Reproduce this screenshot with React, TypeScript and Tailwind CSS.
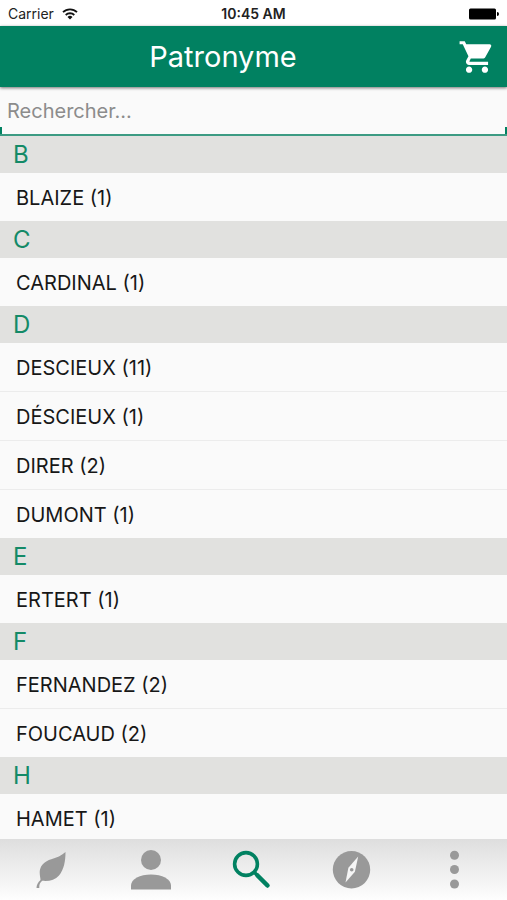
import React from "react";

type Group = { letter: string; names: { name: string; count: number }[] };

const groups: Group[] = [
  { letter: "B", names: [{ name: "BLAIZE", count: 1 }] },
  { letter: "C", names: [{ name: "CARDINAL", count: 1 }] },
  {
    letter: "D",
    names: [
      { name: "DESCIEUX", count: 11 },
      { name: "DÉSCIEUX", count: 1 },
      { name: "DIRER", count: 2 },
      { name: "DUMONT", count: 1 },
    ],
  },
  { letter: "E", names: [{ name: "ERTERT", count: 1 }] },
  {
    letter: "F",
    names: [
      { name: "FERNANDEZ", count: 2 },
      { name: "FOUCAUD", count: 2 },
    ],
  },
  { letter: "H", names: [{ name: "HAMET", count: 1 }] },
];

function StatusBar() {
  return (
    <div className="grid h-[26px] shrink-0 grid-cols-3 items-center bg-white px-2 pt-0.5 text-sm text-[#222]">
      <div className="flex items-center gap-2">
        <span>Carrier</span>
        <svg className="h-3 w-4" viewBox="0 0 16 12" fill="none" stroke="#111" strokeWidth="1.8" aria-hidden="true">
          <path d="M1 4.2a10 10 0 0 1 14 0" />
          <path d="M3.7 7a6.2 6.2 0 0 1 8.6 0" />
          <path d="M5.5 9a3.6 3.6 0 0 1 5 0L8 11.6z" fill="#111" stroke="none" />
        </svg>
      </div>
      <span className="text-center font-semibold">10:45 AM</span>
      <svg className="h-3 w-[30px] justify-self-end" viewBox="0 0 30 12" aria-hidden="true">
        <rect x="0" y="0.5" width="27" height="11" rx="1.5" fill="#000" />
        <path d="M28 4q2 0 2 2t-2 2z" fill="#000" />
      </svg>
    </div>
  );
}

function Header() {
  return (
    <header className="relative z-10 flex h-[61px] shrink-0 items-center bg-[#018161] pr-[11px] shadow-[0_1px_3px_rgba(0,0,0,0.55)]">
      <h1 className="flex-1 pr-3 text-center text-[29px] text-white">Patronyme</h1>
      <button type="button" aria-label="Panier">
        <svg className="size-[38px]" viewBox="0 0 24 24" fill="#fff" aria-hidden="true">
          <path d="M7 18c-1.1 0-1.99.9-1.99 2S5.9 22 7 22s2-.9 2-2-.9-2-2-2zM1 2v2h2l3.6 7.59-1.35 2.45c-.16.28-.25.61-.25.96 0 1.1.9 2 2 2h12v-2H7.42c-.14 0-.25-.11-.25-.25l.03-.12.9-1.63h7.45c.75 0 1.41-.41 1.75-1.03l3.58-6.49A1 1 0 0 0 20 4H5.21l-.94-2H1zm16 16c-1.1 0-1.99.9-1.99 2s.89 2 1.99 2 2-.9 2-2-.9-2-2-2z" />
        </svg>
      </button>
    </header>
  );
}

function SearchField() {
  return (
    <div className="shrink-0 bg-[linear-gradient(#018161,#018161),linear-gradient(#018161,#018161)] bg-[length:2px_9px] bg-[position:left_bottom,right_bottom] bg-no-repeat">
      <input
        type="search"
        aria-label="Rechercher"
        placeholder="Rechercher..."
        className="block h-[49px] w-full border-b-2 border-[#3c9b83] px-[7px] text-xl text-[#222] outline-none placeholder:text-[#8c8c8c]"
      />
    </div>
  );
}

function NameList() {
  return (
    <main className="min-h-0 flex-1 overflow-hidden">
      {groups.map((group) => (
        <section key={group.letter}>
          <h2 className="flex h-[37px] items-center bg-[#e1e1df] px-[13px] text-2xl text-[#148a67]">{group.letter}</h2>
          <ul className="divide-y divide-[#ececec]">
            {group.names.map(({ name, count }) => (
              <li key={name} className="box-content flex h-[47px] items-center px-4 pt-px text-xl text-[#171717]">
                {name} ({count})
              </li>
            ))}
          </ul>
        </section>
      ))}
    </main>
  );
}

const tabs: { label: string; icon: React.ReactNode }[] = [
  {
    label: "Arbre",
    icon: (
      <svg className="size-10" viewBox="0 0 40 40" fill="#999" aria-hidden="true">
        <path d="M35.500 2C31 6 27 7.500 22 9C13 11.500 9.500 17 9.700 23C9.800 26 10.500 28 10.500 30C8 32 6.500 35 6.500 38H9.300C9 35 10 32.500 12.200 30.800C19 31.500 25 30 29 25.500C34 19.500 35.500 11 35.500 2z" />
      </svg>
    ),
  },
  {
    label: "Profil",
    icon: (
      <svg className="size-10" viewBox="0 0 40 40" fill="#999" aria-hidden="true">
        <circle cx="20" cy="10" r="10" />
        <path d="M0 39.5v-4C0 29 9 24.5 20 24.5s20 4.5 20 11v4z" />
      </svg>
    ),
  },
  {
    label: "Recherche",
    icon: (
      <svg className="size-10" viewBox="0 0 40 40" fill="none" stroke="#018161" aria-hidden="true">
        <circle cx="15" cy="14" r="11.4" strokeWidth="3.6" />
        <path d="m23.500 22.500 3 3" strokeWidth="3.5" />
        <path d="M26.500 25.500 36.500 35.500" strokeWidth="4.5" strokeLinecap="round" />
      </svg>
    ),
  },
  {
    label: "Explorer",
    icon: (
      <svg className="size-10" viewBox="0 0 40 40" aria-hidden="true">
        <circle cx="19.5" cy="19.7" r="18.7" fill="#999" />
        <path d="M26.200 6.500 22.900 21.800 13.500 32.500 16.400 17.700z" fill="#f5f5f5" />
        <circle cx="19.7" cy="19.8" r="1.8" fill="#999" />
      </svg>
    ),
  },
  {
    label: "Plus",
    icon: (
      <svg className="size-10" viewBox="0 0 40 40" fill="#999" aria-hidden="true">
        <circle cx="21.5" cy="5.2" r="4.5" />
        <circle cx="21.5" cy="19.5" r="4.5" />
        <circle cx="21.5" cy="34" r="4.5" />
      </svg>
    ),
  },
];

function TabBar() {
  return (
    <nav className="grid h-[61px] shrink-0 grid-cols-5 items-center bg-linear-to-b from-[#dedede] to-[#fefefe] pr-1">
      {tabs.map((tab) => (
        <button key={tab.label} type="button" aria-label={tab.label} className="flex justify-center">
          {tab.icon}
        </button>
      ))}
    </nav>
  );
}

export default function App() {
  return (
    <div className="flex h-screen flex-col bg-[#fafafa] font-[Inter,'Liberation_Sans',sans-serif]">
      <StatusBar />
      <Header />
      <SearchField />
      <NameList />
      <TabBar />
    </div>
  );
}
